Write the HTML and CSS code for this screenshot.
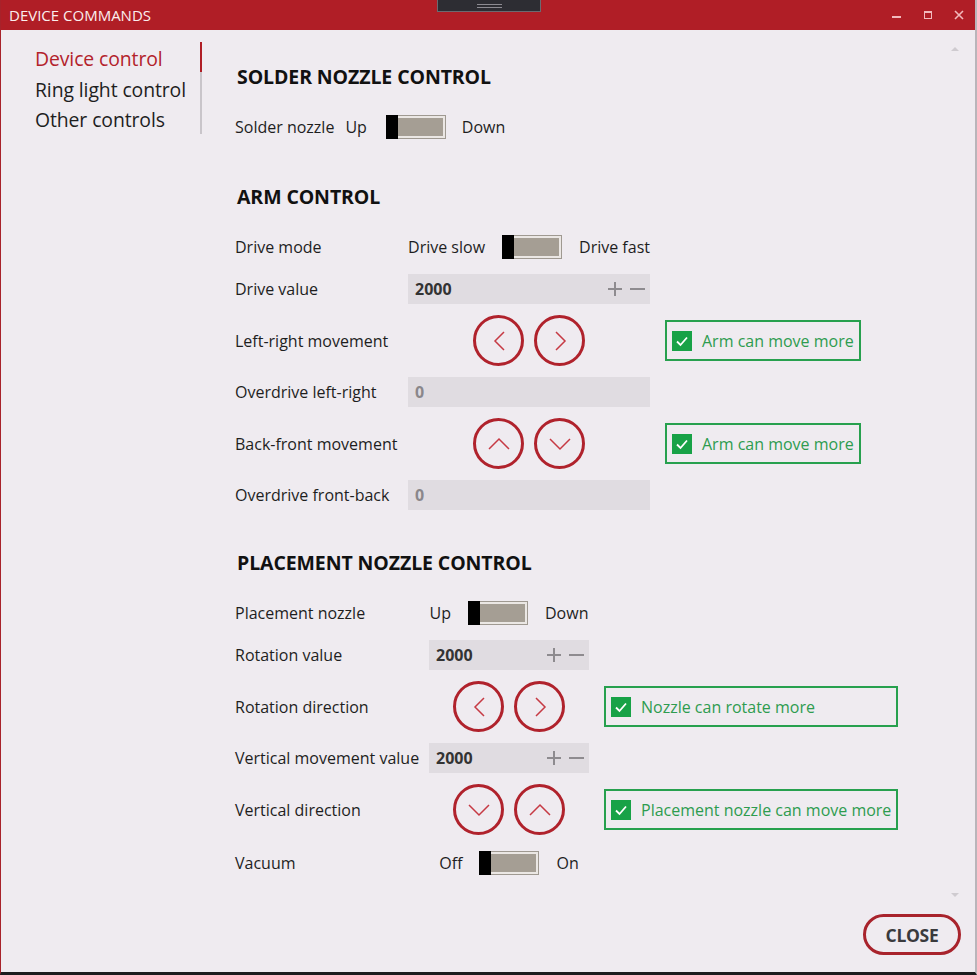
FILE: index.html
```html
<!DOCTYPE html>
<html lang="en">
<head>
<meta charset="utf-8">
<title>Device commands</title>
<link rel="stylesheet" href="styles.css">
</head>
<body>
<div class="window">
  <header class="titlebar">
    <span class="title">DEVICE COMMANDS</span>
    <div class="grip"><span></span><span></span></div>
    <div class="win-controls">
      <svg class="wc" width="12" height="12" viewBox="0 0 12 12"><rect x="1" y="7" width="9" height="2" fill="#f2b9bc"/></svg>
      <svg class="wc" width="12" height="12" viewBox="0 0 12 12"><rect x="2.5" y="2.5" width="7" height="7" fill="none" stroke="#f2b9bc" stroke-width="1"/><rect x="2" y="2" width="8" height="2" fill="#f2b9bc"/></svg>
      <svg class="wc" width="12" height="12" viewBox="0 0 12 12"><path d="M2 2 L10 10 M10 2 L2 10" stroke="#f2b9bc" stroke-width="1.6"/></svg>
    </div>
  </header>

  <div class="body">
    <nav class="nav">
      <a class="nav-item active">Device control</a>
      <a class="nav-item">Ring light control</a>
      <a class="nav-item">Other controls</a>
    </nav>

    <main class="content">
      <section class="section solder">
        <h2 class="heading">SOLDER NOZZLE CONTROL</h2>
        <div class="solder-row">
          <span class="label">Solder nozzle</span>
          <span class="opt up">Up</span>
          <span class="toggle"><span class="thumb"></span></span>
          <span class="opt">Down</span>
        </div>
      </section>

      <section class="section">
        <h2 class="heading">ARM CONTROL</h2>
        <div class="grid arm">
          <span class="label">Drive mode</span>
          <div class="switch-line"><span>Drive slow</span><span class="toggle"><span class="thumb"></span></span><span>Drive fast</span></div>
          <span></span>

          <span class="label">Drive value</span>
          <div class="input"><span class="val">2000</span><span class="pm"><svg width="16" height="16" viewBox="0 0 16 16"><path d="M1 8 H15 M8 1 V15" stroke="#8e8b8f" stroke-width="2"/></svg><svg width="17" height="16" viewBox="0 0 17 16"><path d="M1 8 H16" stroke="#8e8b8f" stroke-width="2"/></svg></span></div>
          <span></span>

          <span class="label">Left-right movement</span>
          <div class="btns">
            <button class="circle"><svg width="20" height="24" viewBox="0 0 20 24"><path d="M15 3 L6 12 L15 21" fill="none" stroke="#c63a44" stroke-width="1.5"/></svg></button>
            <button class="circle"><svg width="20" height="24" viewBox="0 0 20 24"><path d="M6 3 L15 12 L6 21" fill="none" stroke="#c63a44" stroke-width="1.5"/></svg></button>
          </div>
          <div class="check"><span class="box"><svg width="20" height="20" viewBox="0 0 20 20"><path d="M5 10.5 L8.5 14 L15 6.5" fill="none" stroke="#fff" stroke-width="1.8"/></svg></span><span>Arm can move more</span></div>

          <span class="label">Overdrive left-right</span>
          <div class="input"><span class="val muted">0</span></div>
          <span></span>

          <span class="label">Back-front movement</span>
          <div class="btns">
            <button class="circle"><svg width="24" height="20" viewBox="0 0 24 20"><path d="M2 15 L12 5 L22 15" fill="none" stroke="#c63a44" stroke-width="1.5"/></svg></button>
            <button class="circle"><svg width="24" height="20" viewBox="0 0 24 20"><path d="M2 5 L12 15 L22 5" fill="none" stroke="#c63a44" stroke-width="1.5"/></svg></button>
          </div>
          <div class="check"><span class="box"><svg width="20" height="20" viewBox="0 0 20 20"><path d="M5 10.5 L8.5 14 L15 6.5" fill="none" stroke="#fff" stroke-width="1.8"/></svg></span><span>Arm can move more</span></div>

          <span class="label">Overdrive front-back</span>
          <div class="input"><span class="val muted">0</span></div>
          <span></span>
        </div>
      </section>

      <section class="section">
        <h2 class="heading">PLACEMENT NOZZLE CONTROL</h2>
        <div class="grid placement">
          <span class="label">Placement nozzle</span>
          <div class="switch-line"><span>Up</span><span class="toggle"><span class="thumb"></span></span><span>Down</span></div>
          <span></span>

          <span class="label">Rotation value</span>
          <div class="input"><span class="val">2000</span><span class="pm"><svg width="16" height="16" viewBox="0 0 16 16"><path d="M1 8 H15 M8 1 V15" stroke="#8e8b8f" stroke-width="2"/></svg><svg width="17" height="16" viewBox="0 0 17 16"><path d="M1 8 H16" stroke="#8e8b8f" stroke-width="2"/></svg></span></div>
          <span></span>

          <span class="label">Rotation direction</span>
          <div class="btns">
            <button class="circle"><svg width="20" height="24" viewBox="0 0 20 24"><path d="M15 3 L6 12 L15 21" fill="none" stroke="#c63a44" stroke-width="1.5"/></svg></button>
            <button class="circle"><svg width="20" height="24" viewBox="0 0 20 24"><path d="M6 3 L15 12 L6 21" fill="none" stroke="#c63a44" stroke-width="1.5"/></svg></button>
          </div>
          <div class="check"><span class="box"><svg width="20" height="20" viewBox="0 0 20 20"><path d="M5 10.5 L8.5 14 L15 6.5" fill="none" stroke="#fff" stroke-width="1.8"/></svg></span><span>Nozzle can rotate more</span></div>

          <span class="label">Vertical movement value</span>
          <div class="input"><span class="val">2000</span><span class="pm"><svg width="16" height="16" viewBox="0 0 16 16"><path d="M1 8 H15 M8 1 V15" stroke="#8e8b8f" stroke-width="2"/></svg><svg width="17" height="16" viewBox="0 0 17 16"><path d="M1 8 H16" stroke="#8e8b8f" stroke-width="2"/></svg></span></div>
          <span></span>

          <span class="label">Vertical direction</span>
          <div class="btns">
            <button class="circle"><svg width="24" height="20" viewBox="0 0 24 20"><path d="M2 5 L12 15 L22 5" fill="none" stroke="#c63a44" stroke-width="1.5"/></svg></button>
            <button class="circle"><svg width="24" height="20" viewBox="0 0 24 20"><path d="M2 15 L12 5 L22 15" fill="none" stroke="#c63a44" stroke-width="1.5"/></svg></button>
          </div>
          <div class="check"><span class="box"><svg width="20" height="20" viewBox="0 0 20 20"><path d="M5 10.5 L8.5 14 L15 6.5" fill="none" stroke="#fff" stroke-width="1.8"/></svg></span><span>Placement nozzle can move more</span></div>

          <span class="label vac">Vacuum</span>
          <div class="switch-line vac"><span>Off</span><span class="toggle"><span class="thumb"></span></span><span>On</span></div>
          <span></span>
        </div>
      </section>
    </main>

    <span class="scroll-arrow up-arrow"></span>
    <span class="scroll-arrow down-arrow"></span>
  </div>

  <footer class="footer">
    <button class="close">CLOSE</button>
  </footer>
</div>
</body>
</html>
```

FILE: styles.css
```css
* { box-sizing: border-box; }
html, body { margin: 0; padding: 0; }
body {
  width: 977px;
  height: 975px;
  overflow: hidden;
  font-family: "Open Sans", "Noto Sans", sans-serif;
  color: #1e1e1e;
  background: #1c1c1e;
}
.window {
  width: 977px;
  height: 975px;
  display: flex;
  flex-direction: column;
  background: #efebf0;
  border-left: 1px solid #a8222a;
  border-right: 2px solid #b9b5ba;
  border-bottom: 3px solid #1c1c1e;
}
.titlebar {
  position: relative;
  height: 30px;
  flex: 0 0 30px;
  background: #b01e26;
  display: flex;
  align-items: center;
  justify-content: space-between;
  padding: 0 10px 0 8px;
}
.title {
  color: #fbeeee;
  font-size: 15px;
  letter-spacing: 0;
  font-weight: 400;
}
.grip {
  position: absolute;
  left: 436px;
  top: 0;
  width: 104px;
  height: 12px;
  background: #2d2d33;
  border: 1px solid #6c6a70;
  border-top: none;
  display: flex;
  flex-direction: column;
  align-items: center;
  justify-content: center;
  gap: 2px;
}
.grip span {
  display: block;
  width: 25px;
  height: 1px;
  background: #8d8b92;
}
.win-controls {
  display: flex;
  gap: 19px;
  align-items: center;
}
.wc { display: block; }

.body {
  position: relative;
  flex: 1;
  display: flex;
  min-height: 0;
}
.nav {
  margin-left: 34px;
  margin-top: 12px;
  align-self: flex-start;
  width: 167px;
  border-right: 2px solid #c9c5ca;
  display: flex;
  flex-direction: column;
}
.nav-item {
  position: relative;
  display: block;
  height: 30.5px;
  line-height: 33px;
  font-size: 19.4px;
  color: #1e1e1e;
  letter-spacing: -0.1px;
  white-space: nowrap;
}
.nav-item.active { color: #b3222b; }
.nav-item.active::after {
  content: "";
  position: absolute;
  right: -2px;
  top: 0;
  width: 2px;
  height: 30px;
  background: #b01e26;
}

.content {
  margin-left: 33px;
  padding-top: 34px;
  flex: 1;
}
.section { margin-bottom: 39px; }
.section.solder { margin-bottom: 41px; }
.section:last-child { margin-bottom: 0; }
.heading {
  margin: 0 0 21px 2px;
  height: 26px;
  line-height: 26px;
  font-size: 19.5px;
  font-weight: 700;
  color: #111;
  letter-spacing: -0.1px;
}
.label, .opt, .switch-line, .check {
  font-size: 16px;
  white-space: nowrap;
}
.solder-row {
  display: flex;
  align-items: center;
  height: 32px;
}
.solder-row .opt.up { margin-left: 11px; margin-right: 19px; }
.solder-row .opt { margin-left: 16px; }

.grid {
  display: grid;
  column-gap: 15px;
  row-gap: 10px;
  align-items: center;
  justify-content: start;
}
.grid.arm { grid-template-columns: 158px 242px auto; }
.grid.placement { grid-template-columns: 179px 160px auto; }
.grid .label { height: 32px; line-height: 32px; }
.grid .vac { margin-top: 2px; }

.switch-line {
  height: 32px;
  display: flex;
  align-items: center;
  justify-content: center;
  gap: 17px;
}
.toggle {
  position: relative;
  display: inline-block;
  flex: 0 0 60px;
  width: 60px;
  height: 24px;
  background: #a59e94;
  border: 1px solid #9f9991;
  box-shadow: inset 0 0 0 2px #ebe7e4;
}
.thumb {
  position: absolute;
  left: -1px;
  top: -1px;
  width: 12px;
  height: 24px;
  background: #000;
}

.input {
  height: 30px;
  background: #e0dce1;
  display: flex;
  align-items: center;
  justify-content: space-between;
  padding: 0 4px 0 7px;
}
.val {
  font-size: 16px;
  font-weight: 700;
  color: #333;
}
.val.muted { color: #8a878b; }
.pm { display: flex; gap: 6px; align-items: center; }
.pm svg { display: block; }

.btns {
  display: flex;
  justify-content: center;
  gap: 10px;
  height: 51px;
}
.circle {
  width: 51px;
  height: 51px;
  margin: 0;
  border-radius: 50%;
  border: 3px solid #b0222c;
  background: transparent;
  padding: 0;
  display: flex;
  align-items: center;
  justify-content: center;
}
.circle svg { display: block; }

.check {
  height: 41px;
  border: 2px solid #27a04e;
  display: flex;
  align-items: center;
  gap: 10px;
  padding: 0 5px 0 5px;
  color: #2e9c4f;
}
.box {
  flex: 0 0 20px;
  width: 20px;
  height: 20px;
  background: #18a247;
  display: block;
}
.box svg { display: block; }

.scroll-arrow {
  position: absolute;
  right: 16px;
  width: 0;
  height: 0;
  border-left: 4px solid transparent;
  border-right: 4px solid transparent;
}
.up-arrow { top: 17px; border-bottom: 4px solid #cfcbd0; }
.down-arrow { top: 863px; border-top: 4px solid #cfcbd0; }

.footer {
  display: flex;
  justify-content: flex-end;
  padding: 3px 14px 17px 0;
}
.close {
  width: 98px;
  height: 41px;
  border: 3px solid #a8232c;
  border-radius: 21px;
  background: transparent;
  font-family: "Open Sans", "Noto Sans", sans-serif;
  font-size: 17.5px;
  font-weight: 700;
  color: #3a3a3d;
  letter-spacing: -0.3px;
}
```
